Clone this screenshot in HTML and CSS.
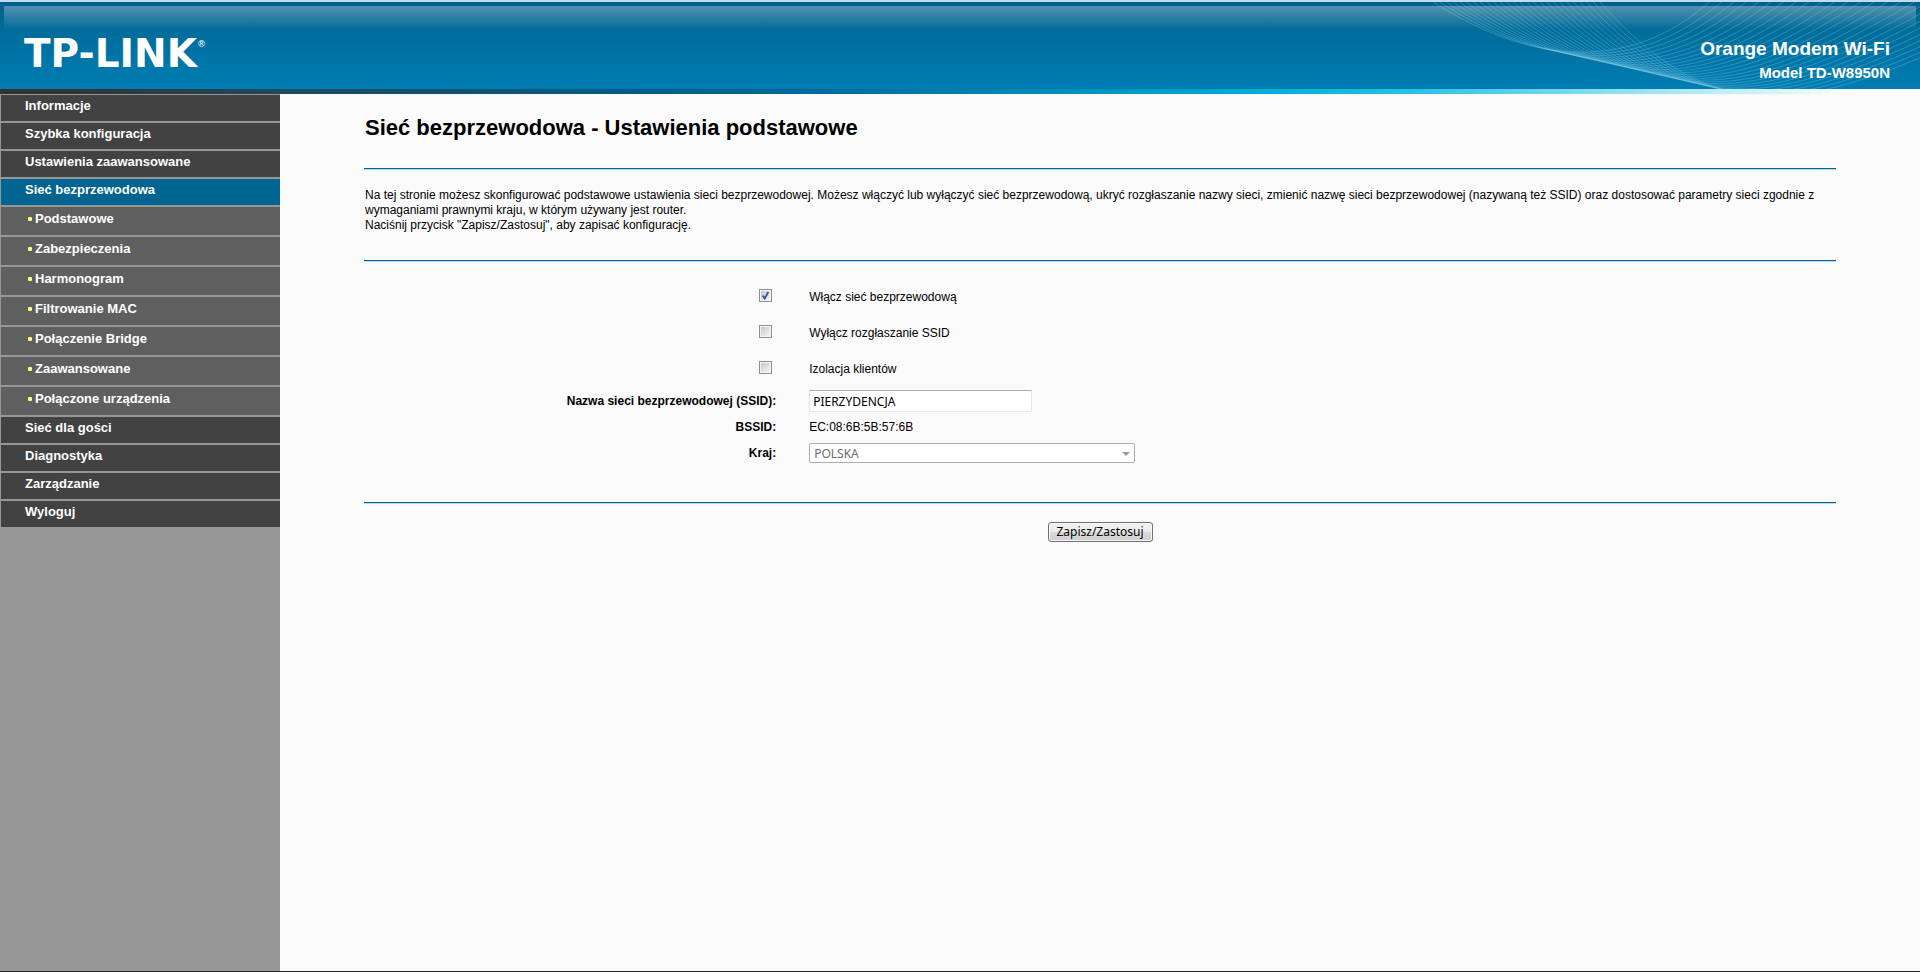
FILE: index.html
```html
<!DOCTYPE html>
<html lang="pl">
<head>
<meta charset="utf-8">
<title>TD-W8950N</title>
<link rel="stylesheet" href="styles.css">
</head>
<body>
<header class="banner">
  <div class="banner-glass"></div>
  <svg class="banner-waves" width="500" height="87" viewBox="0 0 500 87" aria-hidden="true"></svg>
  <div class="logo">TP-LINK<span class="logo-mark">®</span></div>
  <div class="device">
    <div class="device-name">Orange Modem Wi-Fi</div>
    <div class="device-model">Model TD-W8950N</div>
  </div>
</header>
<div class="strip"></div>
<div class="layout">
  <nav class="sidebar">
    <a class="item" href="#">Informacje</a>
    <a class="item" href="#">Szybka konfiguracja</a>
    <a class="item" href="#">Ustawienia zaawansowane</a>
    <a class="item active" href="#">Sieć bezprzewodowa</a>
    <a class="item sub" href="#">Podstawowe</a>
    <a class="item sub" href="#">Zabezpieczenia</a>
    <a class="item sub" href="#">Harmonogram</a>
    <a class="item sub" href="#">Filtrowanie MAC</a>
    <a class="item sub" href="#">Połączenie Bridge</a>
    <a class="item sub" href="#">Zaawansowane</a>
    <a class="item sub" href="#">Połączone urządzenia</a>
    <a class="item" href="#">Sieć dla gości</a>
    <a class="item" href="#">Diagnostyka</a>
    <a class="item" href="#">Zarządzanie</a>
    <a class="item" href="#">Wyloguj</a>
  </nav>
  <main class="content">
    <h1 class="title">Sieć bezprzewodowa - Ustawienia podstawowe</h1>
    <p class="intro">Na tej stronie możesz skonfigurować podstawowe ustawienia sieci bezprzewodowej. Możesz włączyć lub wyłączyć sieć bezprzewodową, ukryć rozgłaszanie nazwy sieci, zmienić nazwę sieci bezprzewodowej (nazywaną też SSID) oraz dostosować parametry sieci zgodnie z wymaganiami prawnymi kraju, w którym używany jest router.<br>Naciśnij przycisk "Zapisz/Zastosuj", aby zapisać konfigurację.</p>
    <form class="form">
      <div class="row tall">
        <div class="lead"><input class="check" type="checkbox" id="enable" checked></div>
        <label for="enable">Włącz sieć bezprzewodową</label>
      </div>
      <div class="row tall">
        <div class="lead"><input class="check" type="checkbox" id="hide"></div>
        <label for="hide">Wyłącz rozgłaszanie SSID</label>
      </div>
      <div class="row tall">
        <div class="lead"><input class="check" type="checkbox" id="isolate"></div>
        <label for="isolate">Izolacja klientów</label>
      </div>
      <div class="fields">
        <div class="row">
          <label class="lead name" for="ssid">Nazwa sieci bezprzewodowej (SSID):</label>
          <input class="text" type="text" id="ssid" value="PIERZYDENCJA">
        </div>
        <div class="row">
          <div class="lead name">BSSID:</div>
          <div>EC:08:6B:5B:57:6B</div>
        </div>
        <div class="row">
          <label class="lead name" for="country">Kraj:</label>
          <div class="select-wrap"><select class="select" id="country" disabled><option>POLSKA</option></select></div>
        </div>
      </div>
      <div class="actions"><button class="save" type="button">Zapisz/Zastosuj</button></div>
    </form>
  </main>
</div>
<script src="waves.js"></script>
</body>
</html>
```

FILE: styles.css
```css
* { box-sizing: border-box; }

body {
  margin: 0;
  min-height: 100vh;
  display: flex;
  flex-direction: column;
  background: #fafafa;
  color: #000;
  font: 12px/15px "Liberation Sans", Arial, sans-serif;
  border-bottom: 1px solid #222226;
}

.banner {
  position: relative;
  display: flex;
  justify-content: space-between;
  height: 89px;
  border-top: 2px solid #c4dbed;
  background: linear-gradient(#005f8a, #006d9b 30px, #007db3);
  color: #fff;
  overflow: hidden;
}

.banner-glass {
  position: absolute;
  inset: 4px 4px auto 4px;
  height: 24px;
  background: linear-gradient(rgba(255, 255, 255, 0.32), rgba(255, 255, 255, 0));
}

.banner-waves {
  position: absolute;
  top: 0;
  right: 0;
}

.banner-waves path {
  fill: none;
  stroke: #9fdcf0;
  stroke-opacity: 0.28;
}

.logo {
  position: relative;
  display: flex;
  padding: 31px 0 0 24px;
  font: bold 39px/42px "DejaVu Sans", sans-serif;
}

.logo-mark {
  font-size: 9px;
  line-height: 22px;
  font-weight: normal;
}

.device {
  position: relative;
  padding: 34px 30px 0 0;
  text-align: right;
  font-weight: bold;
}

.device-name {
  font-size: 19px;
  line-height: 25px;
}

.device-model {
  font-size: 15px;
  line-height: 24px;
}

.strip {
  height: 5px;
  background: linear-gradient(90deg, #333 0, #333 3%, #1f4a5f 15%, #015e87 35%, #006f9f 45%, #00b0d8 66%, #25c0e2 73%, #a8e6f3 87%, #fff 97%);
}

.layout {
  flex: 1;
  display: flex;
}

.sidebar {
  width: 280px;
  display: flex;
  flex-direction: column;
  gap: 2px;
  padding: 1px 0 0 1px;
  background: #969696;
}

.item {
  height: 26px;
  padding: 3px 0 0 24px;
  background: #424242;
  color: #fff;
  font-size: 13px;
  line-height: 16px;
  font-weight: bold;
  text-decoration: none;
}

.item.active { background: #006490; }

.item.sub {
  display: flex;
  gap: 3px;
  height: 28px;
  padding-left: 27px;
  padding-top: 4px;
  background: #5f5f5f;
}

.item.sub::before {
  content: "";
  width: 4px;
  height: 4px;
  margin-top: 6px;
  border-radius: 1px;
  background: #fff58a;
}

.content {
  flex: 1;
  padding: 0 84px;
}

.title {
  margin: 0;
  padding: 21px 0 27px 1px;
  font-size: 22px;
  line-height: 26px;
}

.intro {
  margin: 0;
  padding: 19px 1px 27px;
}

.form { padding-top: 18px; }

.intro,
.form,
.actions {
  border-top: 1px solid #006592;
  box-shadow: inset 0 1px #b9d9e8;
}

.row {
  display: grid;
  grid-template-columns: 28% 1fr;
  column-gap: 33px;
  align-items: center;
  height: 26px;
}

.row.tall { height: 36px; }

.fields { padding-top: 1px; }

.lead { text-align: right; }

.name { font-weight: bold; }

.check {
  appearance: none;
  display: inline-block;
  vertical-align: middle;
  width: 13px;
  height: 13px;
  margin: 0 4px 3px 0;
  padding: 1px;
  border: 1px solid #8e8f8f;
  background: linear-gradient(135deg, #c3c7ce, #f6f6f6) content-box, #f4f4f4;
}

.check:checked {
  background: url("data:image/svg+xml,%3Csvg xmlns='http://www.w3.org/2000/svg' viewBox='0 0 9 9'%3E%3Cpath d='M1.5 4.5L3.7 7.5L7.3 1' fill='none' stroke='%23364f9e' stroke-width='1.8'/%3E%3C/svg%3E") content-box, linear-gradient(135deg, #c3c7ce, #f6f6f6) content-box, #f4f4f4;
}

.text {
  width: 223px;
  height: 22px;
  padding: 0 3px;
  border: 1px solid #e3e9ef;
  border-top-color: #abadb3;
  border-left-color: #e2e3ea;
  border-radius: 1px;
  background: #fff;
  font: 12px "Noto Sans", Tahoma, sans-serif;
}

.select-wrap {
  position: relative;
  width: 326px;
}

.select-wrap::after {
  content: "";
  position: absolute;
  right: 5px;
  top: 9px;
  border: 4px solid transparent;
  border-top-color: #9a9a9a;
  border-bottom: 0;
}

.select {
  appearance: none;
  display: block;
  width: 100%;
  height: 20px;
  padding: 0 4px;
  border: 1px solid #adadad;
  border-radius: 2px;
  background: #fff;
  color: #6d6d6d;
  opacity: 1;
  font: 12px "Noto Sans", Tahoma, sans-serif;
}

.actions {
  margin-top: 36px;
  padding-top: 19px;
  text-align: center;
}

.save {
  width: 105px;
  height: 20px;
  padding: 0;
  border: 1px solid #707070;
  border-radius: 3px;
  background: linear-gradient(#f2f2f2, #ebebeb 50%, #dadada 50%, #cfcfcf);
  color: #000;
  box-shadow: inset 0 0 0 1px #f6f6f6;
  font: 12px/18px "Noto Sans", Tahoma, sans-serif;
}
```

FILE: waves.js
```javascript
// Bundle of curves blended between the outermost two.
const first = [13, 0, 120, 68, 225, 72, 310, -20];
const last = [180, 0, 300, 135, 390, 112, 600, 10];
const count = 26;
const svg = document.querySelector(".banner-waves");
for (let i = 0; i < count; i++) {
  const t = i / (count - 1);
  const p = first.map((v, k) => Math.round((v + (last[k] - v) * t) * 10) / 10);
  const path = document.createElementNS("http://www.w3.org/2000/svg", "path");
  path.setAttribute("d", `M${p[0]},${p[1]} C${p[2]},${p[3]} ${p[4]},${p[5]} ${p[6]},${p[7]}`);
  svg.appendChild(path);
}
```
